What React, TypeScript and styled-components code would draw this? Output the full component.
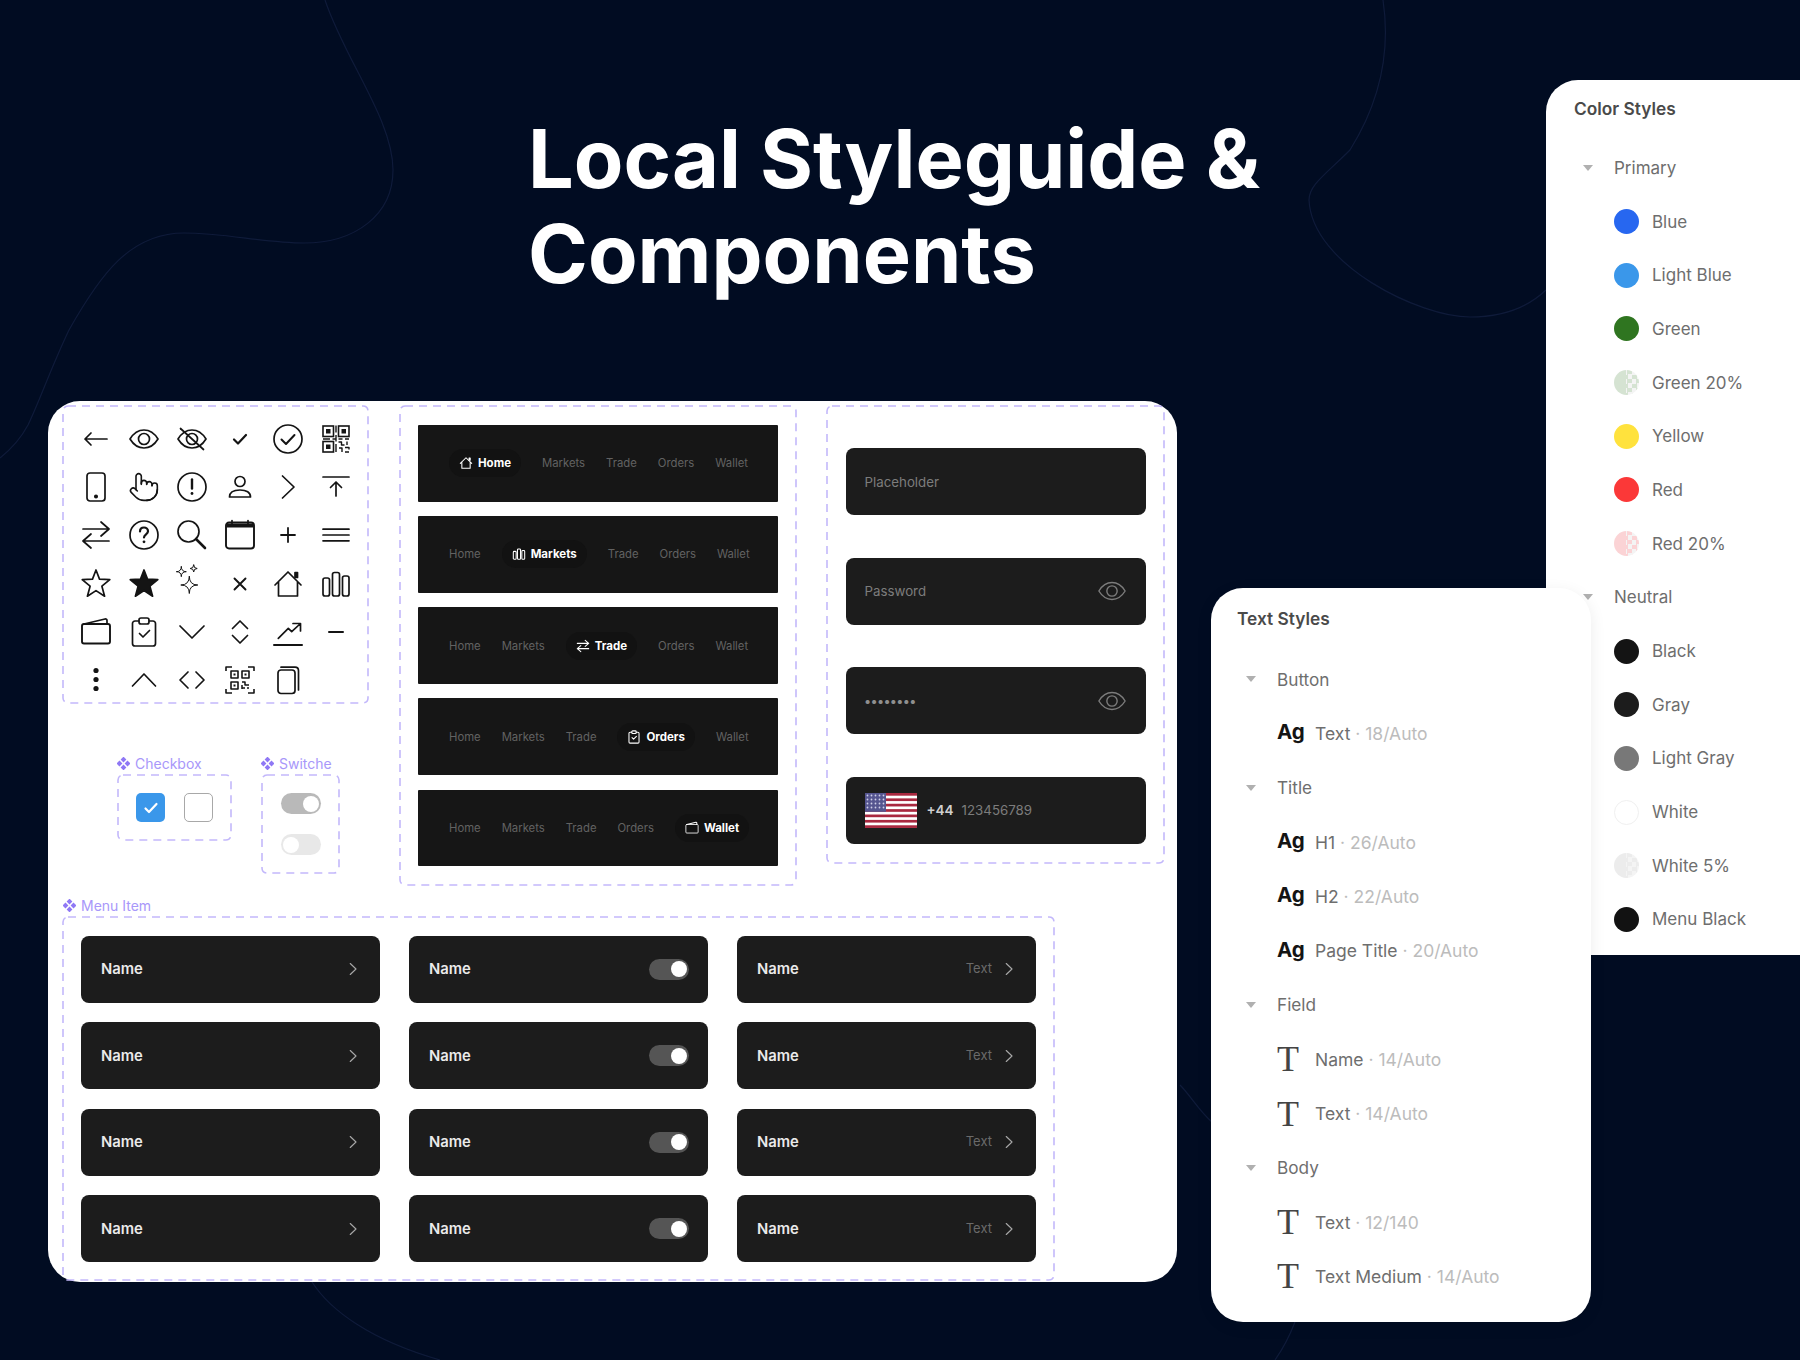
import React from 'react';
import styled, { createGlobalStyle } from 'styled-components';

const GlobalStyle = createGlobalStyle`
  html, body { margin: 0; padding: 0; background: #010c22; }
  * { box-sizing: border-box; }
  body { font-family: Inter, "Noto Sans", "Liberation Sans", sans-serif; }
`

const Page = styled.div`
  position: relative;
  display: flex;
  align-items: flex-start;
  width: 1800px;
  height: 1360px;
  overflow: hidden;
  background: #010c22;
`

const Curves = styled.svg`
  position: absolute;
  inset: 0;
  fill: none;
  stroke: #0f1b3a;
  stroke-width: 1.2;
`

const LeftColumn = styled.div`
  position: relative;
  width: 1129px;
  margin-left: 48px;
  padding-top: 112px;
  flex: none;
`

const Title = styled.h1`
  margin: 0 0 99px 480px;
  color: #fff;
  font-size: 81px;
  font-weight: 700;
  line-height: 95px;
  letter-spacing: 0;
  white-space: nowrap;
`

const Card = styled.div`
  width: 1129px;
  height: 881px;
  padding: 4px 0 0 14px;
  background: #fff;
  border-radius: 32px;
`

const TopRow = styled.div`
  display: flex;
  align-items: flex-start;
  gap: 30px;
  height: 481px;
`

const dashed = `
  background-image: url("data:image/svg+xml,%3Csvg xmlns='http://www.w3.org/2000/svg' width='100%25' height='100%25'%3E%3Crect x='1' y='1' width='calc(100%25 - 2px)' height='calc(100%25 - 2px)' rx='5' fill='none' stroke='%23c3b8fb' stroke-width='1.6' stroke-dasharray='8 6'/%3E%3C/svg%3E");
`

const IconFrame = styled.div`
  ${dashed}
  display: grid;
  grid-template-columns: repeat(6, 32px);
  grid-auto-rows: 32px;
  gap: 16.2px 16px;
  width: 307px;
  height: 299px;
  padding: 18px 0 0 18px;
`

const IconSvg = styled.svg<{ $stroke?: number }>`
  display: block;
  overflow: visible;
  fill: none;
  stroke: currentColor;
  stroke-width: ${p => p.$stroke ?? 1.7};
  stroke-linecap: round;
  stroke-linejoin: round;
  flex: none;
`

const IconCell = styled.div`
  color: #141414;
`

const Star4 = ({ x, y, r }: { x: number, y: number, r: number }) => (
    <path d={`M${x} ${y - r}Q${x} ${y} ${x + r} ${y}Q${x} ${y} ${x} ${y + r}Q${x} ${y} ${x - r} ${y}Q${x} ${y} ${x} ${y - r}Z`} strokeWidth={1} />
)

const starPoints = '16,2 19.5,11.1 29.8,11.7 21.9,18.2 24.6,28.2 16,22.6 7.4,28.2 10.1,18.2 2.2,11.7 12.5,11.1'
const eyePath = 'M2 16C6 9.5 10.5 7 16 7s10 2.5 14 9c-4 6.5-8.5 9-14 9S6 22.5 2 16z'

const glyphs: Record<string, React.ReactNode> = {
    arrowLeft: <path d="M27 16H5M11 10l-6 6 6 6" />,
    eye: <><path d={eyePath} /><circle cx="16" cy="16" r="5.5" /></>,
    eyeOff: <><path d={eyePath} /><circle cx="16" cy="16" r="5.5" /><path d="M4.5 5.5l23 21" /></>,
    check: <path d="M10 16.5l4 4 8-8.5" strokeWidth={2.2} />,
    checkCircle: <><circle cx="16" cy="16" r="14" /><path d="M9.5 16.5l4.5 4.5 8.5-9" strokeWidth={2} /></>,
    qr: (
        <>
            <rect x="3" y="3" width="10.5" height="10.5" strokeWidth={1.6} strokeLinejoin="miter" />
            <rect x="18.500" y="3" width="10.5" height="10.5" strokeWidth={1.6} strokeLinejoin="miter" />
            <rect x="3" y="18.500" width="10.5" height="10.5" strokeWidth={1.6} strokeLinejoin="miter" />
            <rect x="6" y="6" width="4.5" height="4.5" fill="currentColor" stroke="none" />
            <rect x="21.500" y="6" width="4.5" height="4.5" fill="currentColor" stroke="none" />
            <rect x="6" y="21.500" width="4.5" height="4.5" fill="currentColor" stroke="none" />
            <path d="M3 16h7M12.500 16h3M16 2.500v7M16 12v6.500M16 21v8M18.500 16h4M25 16h4M18.500 19h3v3h3M27 18.500v3.500M19 25h3v4M25 24.500h4v2M25 29h4" strokeWidth={1.4} strokeLinecap="butt" />
        </>
    ),
    phone: <><rect x="7" y="2" width="18" height="28" rx="3" /><circle cx="16" cy="25.5" r="1.2" fill="currentColor" /></>,
    hand: (
        <g transform="scale(1.333)" strokeWidth={1.2}>
            <path d="M22 14a8 8 0 0 1-8 8" />
            <path d="M18 11v-1a2 2 0 0 0-2-2a2 2 0 0 0-2 2" />
            <path d="M14 10V9a2 2 0 0 0-2-2a2 2 0 0 0-2 2v1" />
            <path d="M10 9.5V4a2 2 0 0 0-2-2a2 2 0 0 0-2 2v10" />
            <path d="M18 11a2 2 0 1 1 4 0v3a8 8 0 0 1-8 8h-2c-2.8 0-4.5-.86-5.99-2.34l-3.6-3.6a2 2 0 0 1 2.83-2.82L7 15" />
        </g>
    ),
    alert: <><circle cx="16" cy="16" r="14" /><path d="M16 8.5v9" strokeWidth={2.4} /><circle cx="16" cy="22.5" r="1.4" fill="currentColor" stroke="none" /></>,
    user: <><circle cx="16" cy="10.5" r="5" /><path d="M5.5 26c0-4.5 4-7 10.5-7s10.5 2.5 10.5 7z" /></>,
    chevronRight: <path d="M10.5 5L22 16 10.5 27" />,
    arrowUpBar: <path d="M3 6h26M16 25V11M10.5 16.5L16 11l5.5 5.5" />,
    swap: <path d="M3 10h26M21 3l8 7-8 7M29 22H3M11 15l-8 7 8 7" />,
    question: <><circle cx="16" cy="16" r="14" /><path d="M12 12.5c0-2.5 1.8-4 4-4s4 1.5 4 3.8c0 3-4 3-4 6.2" strokeWidth={2.2} /><circle cx="16" cy="22.8" r="1.4" fill="currentColor" stroke="none" /></>,
    search: <><circle cx="12.5" cy="12.5" r="10.5" /><path d="M20 20l9 9" strokeWidth={2.6} /></>,
    calendar: <><rect x="2" y="3.5" width="28" height="26" rx="3" strokeWidth={1.9} /><path d="M2.5 6.5h27" strokeWidth={4} strokeLinecap="butt" /><path d="M8 1.5v3M24 1.5v3" /></>,
    plus: <path d="M16 9v14M9 16h14" strokeWidth={1.8} />,
    menu: <path d="M3 10.2h26M3 16h26M3 21.8h26" />,
    star: <polygon points={starPoints} />,
    starFilled: <polygon points={starPoints} fill="currentColor" />,
    sparkle: <><Star4 x={13.3} y={17} r={8.5} /><Star4 x={5.3} y={3.7} r={5} /><Star4 x={17.7} y={0.5} r={3.5} /></>,
    close: <path d="M10.5 10.5l11 11M21.5 10.5l-11 11" strokeWidth={1.9} />,
    house: <><path d="M3 17L16 4l13 13M6.5 14v14h19V14" /><rect x="23" y="4.5" width="2.5" height="5" fill="currentColor" /></>,
    bars: <><rect x="3" y="10" width="6.500" height="18" rx="2" /><rect x="12.5" y="4.5" width="7" height="23.5" rx="2" /><rect x="22.5" y="8" width="6.5" height="20" rx="2" /></>,
    wallet: <><rect x="2" y="8" width="28" height="19.5" rx="2" strokeWidth={1.9} /><path d="M4 8L25 3c1-.2 2 .5 2 1.5V8" /></>,
    clipboard: (
        <>
            <path d="M11 5H7a2.500 2.500 0 0 0-2.500 2.500v20A2.500 2.500 0 0 0 7 30h18a2.500 2.500 0 0 0 2.500-2.500v-20A2.500 2.500 0 0 0 25 5h-4" />
            <rect x="11" y="2" width="10" height="6" rx="2" />
            <path d="M11.5 17.500l3.500 3.500 6.500-6.500" />
        </>
    ),
    chevronDown: <path d="M4 10l12 12 12-12" />,
    chevrons: <path d="M8.5 12.5L16 5l7.500 7.500M8.5 19.5L16 27l7.500-7.500" />,
    trend: <><path d="M2 29h28" strokeWidth={2} /><path d="M6.3 22.3l10-10 3.4 3.4L28 8M21 7.5h7.500V15" /></>,
    minus: <path d="M9 16h14" strokeWidth={2} />,
    dots: <><circle cx="16" cy="6.5" r="2.6" fill="currentColor" stroke="none" /><circle cx="16" cy="15.5" r="2.6" fill="currentColor" stroke="none" /><circle cx="16" cy="24.5" r="2.6" fill="currentColor" stroke="none" /></>,
    chevronUp: <path d="M4.5 22L16 10l11.5 12" />,
    code: <path d="M12 8l-8 8 8 8M20 8l8 8-8 8" />,
    scan: (
        <>
            <path d="M2 7V3h6M24 3h6v4M2 25v4h6M24 29h6v-4" strokeWidth={1.6} strokeLinecap="butt" />
            <rect x="7" y="7" width="7" height="7" strokeWidth={1.6} />
            <rect x="18" y="7" width="7" height="7" strokeWidth={1.6} />
            <rect x="7" y="18" width="7" height="7" strokeWidth={1.6} />
            <rect x="9.5" y="9.5" width="2" height="2" fill="currentColor" stroke="none" />
            <rect x="20.5" y="9.5" width="2" height="2" fill="currentColor" stroke="none" />
            <rect x="9.5" y="20.5" width="2" height="2" fill="currentColor" stroke="none" />
            <path d="M18 18h3v3h4M18 24h3M23 24h2M18 21v4" strokeWidth={1.5} strokeLinecap="butt" />
        </>
    ),
    copy: <><rect x="6" y="6" width="17" height="23.5" rx="3" /><path d="M9 3.2h14c2 0 3.5 1.5 3.5 3.5V26" /></>,
}

const Glyph = (params: { name: string, size?: number, stroke?: number }) => (
    <IconSvg viewBox="0 0 32 32" width={params.size ?? 32} height={params.size ?? 32} $stroke={params.stroke}>
        {glyphs[params.name]}
    </IconSvg>
)

const iconNames = [
    'arrowLeft', 'eye', 'eyeOff', 'check', 'checkCircle', 'qr',
    'phone', 'hand', 'alert', 'user', 'chevronRight', 'arrowUpBar',
    'swap', 'question', 'search', 'calendar', 'plus', 'menu',
    'star', 'starFilled', 'sparkle', 'close', 'house', 'bars',
    'wallet', 'clipboard', 'chevronDown', 'chevrons', 'trend', 'minus',
    'dots', 'chevronUp', 'code', 'scan', 'copy',
]

const LeftStack = styled.div`
  width: 307px;
`

const WidgetRow = styled.div`
  display: flex;
  align-items: flex-start;
  gap: 29px;
  margin: 50px 0 0 55px;
`

const Label = styled.div`
  display: flex;
  align-items: center;
  gap: 5px;
  height: 18px;
  margin-bottom: 2px;
  color: #a897fa;
  font-size: 14px;
  white-space: nowrap;
`

const ComponentMark = () => (
    <svg width="13" height="13" viewBox="0 0 13 13" fill="#8f78f5">
        <path d="M6.5 -.4L9.4 2.5 6.5 5.4 3.600 2.500zM2.500 3.600L5.400 6.500 2.500 9.400 -.4 6.500zM10.500 3.600L13.400 6.500 10.500 9.400 7.600 6.500zM6.500 7.600L9.400 10.500 6.500 13.400 3.600 10.500z" />
    </svg>
)

const CheckFrame = styled.div`
  ${dashed}
  display: flex;
  gap: 19px;
  width: 115px;
  height: 67px;
  padding: 19px;
`

const CheckBox = styled.div<{ $on?: boolean }>`
  display: flex;
  align-items: center;
  justify-content: center;
  width: 29px;
  height: 29px;
  border-radius: 5px;
  color: #fff;
  background: ${p => p.$on ? '#3a97ea' : '#fff'};
  border: ${p => p.$on ? 'none' : '1.5px solid #a8a8a8'};
`

const SwitchFrame = styled.div`
  ${dashed}
  display: flex;
  flex-direction: column;
  align-items: center;
  gap: 20px;
  width: 79px;
  height: 100px;
  padding-top: 19px;
`

const Toggle = styled.div<{ $track: string, $left?: boolean }>`
  display: flex;
  align-items: center;
  justify-content: ${p => p.$left ? 'flex-start' : 'flex-end'};
  flex: none;
  width: 40px;
  height: 21px;
  padding: 0 2px;
  border-radius: 11px;
  background: ${p => p.$track};
`

const Knob = styled.div`
  width: 16px;
  height: 16px;
  border-radius: 50%;
  background: #fff;
`

const NavFrame = styled.div`
  ${dashed}
  display: flex;
  flex-direction: column;
  gap: 14.6px;
  width: 398px;
  height: 481px;
  padding: 20px 19px;
`

const NavBar = styled.div`
  display: flex;
  align-items: center;
  gap: 21px;
  height: 77px;
  padding: 0 31px;
  background: #161616;
  border-radius: 1px;
`

const NavText = styled.span`
  color: #626262;
  font-size: 11.3px;
  white-space: nowrap;
`

const NavPill = styled.span`
  display: flex;
  align-items: center;
  gap: 5px;
  height: 28px;
  padding: 0 10px;
  border-radius: 14px;
  background: #121212;
  color: #fff;
  font-size: 11.5px;
  font-weight: 700;
  white-space: nowrap;
`

const navItems = [
    { text: 'Home', icon: 'house' },
    { text: 'Markets', icon: 'bars' },
    { text: 'Trade', icon: 'swap' },
    { text: 'Orders', icon: 'clipboard' },
    { text: 'Wallet', icon: 'wallet' },
]

const FieldFrame = styled.div`
  ${dashed}
  display: flex;
  flex-direction: column;
  gap: 42.5px;
  width: 339px;
  height: 459px;
  margin-left: -1.5px;
  padding: 43px 19px 0 20px;
`

const Field = styled.div`
  display: flex;
  align-items: center;
  justify-content: space-between;
  height: 67px;
  padding: 0 19px;
  background: #1c1c1c;
  border-radius: 8px;
  color: #7c7c7c;
  font-size: 13.3px;
`

const Dots = styled.span`
  color: #8f8f8f;
  font-size: 13px;
  font-weight: 700;
  letter-spacing: 0.3px;
`

const PhoneGroup = styled.div`
  display: flex;
  align-items: center;
`

const Flag = styled.svg`
  display: block;
  margin-right: 10px;
`

const Prefix = styled.span`
  margin-right: 8px;
  color: #cfcfcf;
  font-size: 13.5px;
  font-weight: 600;
`

const UsFlag = () => (
    <Flag width="52" height="35" viewBox="0 0 52 35">
        <rect width="52" height="35" fill="#fff" />
        {[0, 2, 4, 6, 8, 10, 12].map(i => (
            <rect key={i} y={i * 2.69} width="52" height="2.69" fill="#a9283f" />
        ))}
        <rect width="21" height="18.8" fill="#55558f" />
        {[2.5, 6.5, 10.5, 14.5].map(y =>
            [2.5, 6.5, 10.5, 14.5, 18.5].map(x => (
                <circle key={`${x}-${y}`} cx={x} cy={y} r="0.9" fill="#cfcfe8" />
            ))
        )}
    </Flag>
)

const MenuLabel = styled(Label)`
  margin: 10px 0 2px 1px;
`

const MenuFrame = styled.div`
  ${dashed}
  display: grid;
  grid-template-columns: repeat(3, 299px);
  grid-auto-rows: 67px;
  gap: 19.5px 29px;
  width: 993px;
  height: 365px;
  padding: 19.5px 19px;
`

const MenuRow = styled.div`
  display: flex;
  align-items: center;
  justify-content: space-between;
  padding: 0 19px 0 20px;
  background: #1c1c1c;
  border-radius: 8px;
`

const MenuName = styled.span`
  color: #eaeaea;
  font-size: 14.8px;
  font-weight: 600;
`

const MenuSide = styled.div`
  display: flex;
  align-items: center;
  gap: 9px;
  color: #a8a8a8;
`

const MenuText = styled.span`
  color: #6a6a6a;
  font-size: 13px;
  margin-top: -2px;
`

const Panel = styled.div<{ $height: number, $left: number, $top: number, $width: number, $front?: boolean }>`
  position: relative;
  z-index: ${p => p.$front ? 2 : 1};
  flex: none;
  width: ${p => p.$width}px;
  height: ${p => p.$height}px;
  margin: ${p => p.$top}px 0 0 ${p => p.$left}px;
  padding-left: ${p => p.$front ? 26 : 28}px;
  background: #fff;
  border-radius: ${p => p.$front ? '32px' : '32px 0 0 0'};
  box-shadow: ${p => p.$front ? '0 4px 16px rgba(0, 0, 0, .08)' : 'none'};
`

const PanelTitle = styled.div<{ $height: number, $gap: number }>`
  display: flex;
  align-items: center;
  height: ${p => p.$height}px;
  margin-bottom: ${p => p.$gap}px;
  padding-top: 1px;
  color: #4a4a4a;
  font-size: 17.3px;
  font-weight: 600;
`

const TreeRow = styled.div<{ $height: number, $size: number, $group?: boolean }>`
  display: flex;
  align-items: center;
  height: ${p => p.$height}px;
  padding-left: ${p => p.$group ? 9 : 40}px;
  color: #6e6e6e;
  font-size: ${p => p.$size}px;
  white-space: nowrap;
`

const Triangle = styled.span`
  width: 0;
  height: 0;
  margin-right: 21px;
  border-left: 5px solid transparent;
  border-right: 5px solid transparent;
  border-top: 6px solid #b0b0b0;
`

const Swatch = styled.span<{ $color: string, $tint?: boolean, $line?: boolean }>`
  flex: none;
  width: 25px;
  height: 25px;
  margin-right: 13px;
  border-radius: 50%;
  background: ${p => p.$tint
    ? `linear-gradient(to right, ${p.$color} 50%, transparent 50%), repeating-conic-gradient(${p.$color} 0 25%, #f4f4f4 0 50%) 0 0 / 9px 9px`
    : p.$color};
  border: ${p => p.$line ? '1px solid #f0f0f0' : 'none'};
`

const AgMark = styled.span`
  width: 38px;
  flex: none;
  margin-top: -3px;
  color: #141414;
  font-size: 20.5px;
  font-weight: 700;
`

const SerifT = styled.span`
  width: 38px;
  flex: none;
  color: #444;
  font-family: "Liberation Serif", serif;
  font-size: 36px;
  line-height: 36px;
`

const Meta = styled.span`
  color: #bcbcbc;
`

type ColorRow = { group?: boolean, name: string, color?: string, tint?: boolean, line?: boolean }

const colorRows: ColorRow[] = [
    { group: true, name: 'Primary' },
    { name: 'Blue', color: '#2767f0' },
    { name: 'Light Blue', color: '#3a97ea' },
    { name: 'Green', color: '#2f7520' },
    { name: 'Green 20%', color: '#d5e3d2', tint: true },
    { name: 'Yellow', color: '#ffe23d' },
    { name: 'Red', color: '#fb3838' },
    { name: 'Red 20%', color: '#fbd3d5', tint: true },
    { group: true, name: 'Neutral' },
    { name: 'Black', color: '#141414' },
    { name: 'Gray', color: '#1c1c1c' },
    { name: 'Light Gray', color: '#787878' },
    { name: 'White', color: '#fff', line: true },
    { name: 'White 5%', color: '#ececec', tint: true },
    { name: 'Menu Black', color: '#121212' },
]

type TextRow = { group?: boolean, mark?: string, name: string, meta?: string }

const textRows: TextRow[] = [
    { group: true, name: 'Button' },
    { mark: 'Ag', name: 'Text', meta: '18/Auto' },
    { group: true, name: 'Title' },
    { mark: 'Ag', name: 'H1', meta: '26/Auto' },
    { mark: 'Ag', name: 'H2', meta: '22/Auto' },
    { mark: 'Ag', name: 'Page Title', meta: '20/Auto' },
    { group: true, name: 'Field' },
    { mark: 'T', name: 'Name', meta: '14/Auto' },
    { mark: 'T', name: 'Text', meta: '14/Auto' },
    { group: true, name: 'Body' },
    { mark: 'T', name: 'Text', meta: '12/140' },
    { mark: 'T', name: 'Text Medium', meta: '14/Auto' },
]

export default function App () {
    return (
        <Page>
            <GlobalStyle />
            <Curves width="1800" height="1360" viewBox="0 0 1800 1360">
                <path d="M325 0C345 60 393 120 393 170C393 215 355 243 304 243C265 243 225 233 184 233C130 233 100 275 69 330C50 370 40 400 28 425C20 440 10 450 0 458" />
                <path d="M1383 0C1392 60 1375 110 1350 150C1325 175 1309 185 1309 200C1312 265 1420 317 1470 317C1500 317 1525 310 1546 290" />
                <path d="M312 1282C330 1310 370 1340 440 1360" />
                <path d="M1180 1085C1190 1095 1200 1112 1212 1122" />
                <path d="M1295 1322C1290 1335 1282 1350 1275 1360" />
            </Curves>
            <LeftColumn>
                <Title>Local Styleguide &amp;<br />Components</Title>
                <Card>
                    <TopRow>
                        <LeftStack>
                            <IconFrame>
                                {iconNames.map(name => (
                                    <IconCell key={name}><Glyph name={name} /></IconCell>
                                ))}
                            </IconFrame>
                            <WidgetRow>
                                <div>
                                    <Label><ComponentMark />Checkbox</Label>
                                    <CheckFrame>
                                        <CheckBox $on>
                                            <IconSvg viewBox="0 0 16 16" width="16" height="16" $stroke={2.2}>
                                                <path d="M2.5 8.5l3.5 3.5 7.5-8" />
                                            </IconSvg>
                                        </CheckBox>
                                        <CheckBox />
                                    </CheckFrame>
                                </div>
                                <div>
                                    <Label><ComponentMark />Switche</Label>
                                    <SwitchFrame>
                                        <Toggle $track="#b9b9b9"><Knob /></Toggle>
                                        <Toggle $track="#e8e8e8" $left><Knob /></Toggle>
                                    </SwitchFrame>
                                </div>
                            </WidgetRow>
                        </LeftStack>
                        <NavFrame>
                            {navItems.map(active => (
                                <NavBar key={active.text}>
                                    {navItems.map(item => item === active ? (
                                        <NavPill key={item.text}>
                                            <Glyph name={item.icon} size={14} stroke={2.4} />
                                            {item.text}
                                        </NavPill>
                                    ) : (
                                        <NavText key={item.text}>{item.text}</NavText>
                                    ))}
                                </NavBar>
                            ))}
                        </NavFrame>
                        <FieldFrame>
                            <Field>Placeholder</Field>
                            <Field>Password<Glyph name="eye" size={30} stroke={1.5} /></Field>
                            <Field><Dots>••••••••</Dots><Glyph name="eye" size={30} stroke={1.5} /></Field>
                            <Field>
                                <PhoneGroup>
                                    <UsFlag />
                                    <Prefix>+44</Prefix>
                                    123456789
                                </PhoneGroup>
                            </Field>
                        </FieldFrame>
                    </TopRow>
                    <MenuLabel><ComponentMark />Menu Item</MenuLabel>
                    <MenuFrame>
                        {[0, 1, 2, 3].map(row => (
                            <React.Fragment key={row}>
                                <MenuRow>
                                    <MenuName>Name</MenuName>
                                    <MenuSide><Glyph name="chevronRight" size={16} stroke={2.2} /></MenuSide>
                                </MenuRow>
                                <MenuRow>
                                    <MenuName>Name</MenuName>
                                    <Toggle $track="#555"><Knob /></Toggle>
                                </MenuRow>
                                <MenuRow>
                                    <MenuName>Name</MenuName>
                                    <MenuSide>
                                        <MenuText>Text</MenuText>
                                        <Glyph name="chevronRight" size={16} stroke={2.2} />
                                    </MenuSide>
                                </MenuRow>
                            </React.Fragment>
                        ))}
                    </MenuFrame>
                </Card>
            </LeftColumn>
            <Panel $front $width={380} $height={734} $left={34} $top={588}>
                <PanelTitle $height={60} $gap={4}>Text Styles</PanelTitle>
                {textRows.map((row, i) => (
                    <TreeRow key={i} $height={54.3} $size={row.group ? 17.2 : 17.5} $group={row.group}>
                        {row.group && <Triangle />}
                        {row.mark === 'Ag' && <AgMark>Ag</AgMark>}
                        {row.mark === 'T' && <SerifT>T</SerifT>}
                        {row.name}
                        {row.meta && <Meta>&nbsp;· {row.meta}</Meta>}
                    </TreeRow>
                ))}
            </Panel>
            <Panel $width={254} $height={875} $left={-45} $top={80}>
                <PanelTitle $height={56} $gap={5}>Color Styles</PanelTitle>
                {colorRows.map(row => (
                    <TreeRow key={row.name} $height={53.7} $size={17} $group={row.group}>
                        {row.group && <Triangle />}
                        {row.color && <Swatch $color={row.color} $tint={row.tint} $line={row.line} />}
                        {row.name}
                    </TreeRow>
                ))}
            </Panel>
        </Page>
    )
}
